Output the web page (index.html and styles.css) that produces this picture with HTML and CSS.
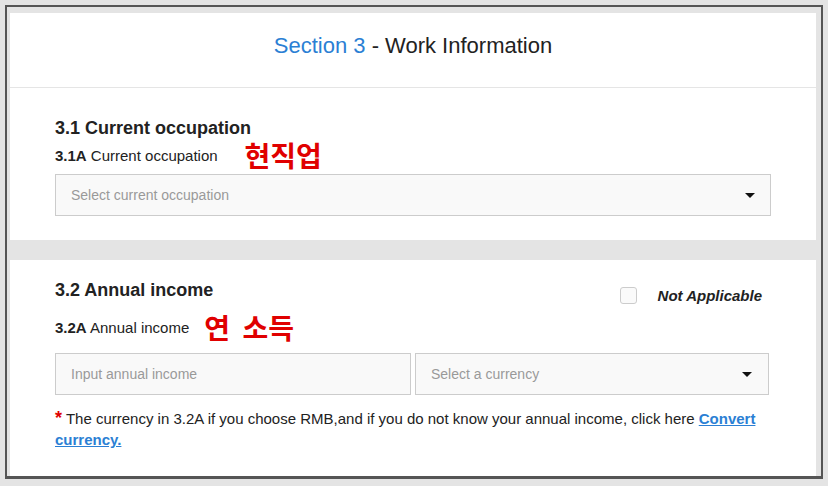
FILE: index.html
```html
<!DOCTYPE html>
<html lang="en">
<head>
  <meta charset="UTF-8">
  <meta name="viewport" content="width=device-width, initial-scale=1.0">
  <title>Section 3 - Work Information</title>
  <link rel="stylesheet" href="styles.css">
</head>
<body>
  <div class="frame">
    <div class="card">
      <div class="card-header">
        <h1><span class="accent">Section 3</span> - Work Information</h1>
      </div>

      <div class="section">
        <h2>3.1 Current occupation</h2>
        <div class="label-row">
          <label class="label"><b>3.1A</b> Current occupation</label>
          <span class="note-ko">현직업</span>
        </div>
        <div class="select">
          <span class="placeholder">Select current occupation</span>
          <span class="caret"></span>
        </div>
      </div>

      <div class="divider"></div>

      <div class="section section-income">
        <div class="title-row">
          <h2>3.2 Annual income</h2>
          <label class="na">
            <span class="checkbox"></span>
            <span class="na-text">Not Applicable</span>
          </label>
        </div>
        <div class="label-row">
          <label class="label"><b>3.2A</b> Annual income</label>
          <span class="note-ko ko-income">연 소득</span>
        </div>
        <div class="field-row">
          <div class="input"><span class="placeholder">Input annual income</span></div>
          <div class="select">
            <span class="placeholder">Select a currency</span>
            <span class="caret"></span>
          </div>
        </div>
        <p class="hint"><span class="star">*</span> The currency in 3.2A if you choose RMB,and if you do not know your annual income, click here <a href="#">Convert currency.</a></p>
      </div>
    </div>
  </div>
</body>
</html>
```

FILE: styles.css
```css
/* 기본 설정 */
:root {
  --accent-color: #2b7fd4;
  --text-color: #222;
  --muted-color: #999;
  --gray-bg: #e4e4e4;
}

body {
  margin: 0;
  padding: 5px;
  background-color: var(--gray-bg);
  font-family: 'Liberation Sans', Arial, sans-serif;
  color: var(--text-color);
}

.frame {
  height: 474px;
  border: 2px solid #555;
  border-bottom-width: 3px;
  padding: 6px 5px 0 3px;
  box-sizing: border-box;
}

.card {
  background: #fff;
  height: 100%;
}

/* 헤더 */
.card-header {
  height: 75px;
  box-sizing: border-box;
  border-bottom: 1px solid #e5e5e5;
  padding-top: 20px;
  text-align: center;
}

h1 {
  margin: 0;
  font-size: 22px;
  font-weight: normal;
  color: #222;
}

.accent {
  color: var(--accent-color);
}

/* 섹션 */
.section {
  padding: 30px 45px 24px;
}

h2 {
  margin: 0;
  font-size: 18px;
  font-weight: bold;
}

.label-row {
  display: flex;
  align-items: center;
  height: 32px;
}

.label {
  font-size: 15px;
}

.note-ko {
  font-family: 'Noto Sans CJK KR', sans-serif;
  font-weight: bold;
  font-size: 28px;
  color: #e00000;
  margin-left: 27px;
  line-height: 32px;
}

.ko-income {
  margin-left: 15px;
  word-spacing: 6px;
}

.select,
.input {
  height: 42px;
  border: 1px solid #ccc;
  background: #f9f9f9;
  box-sizing: border-box;
  display: flex;
  align-items: center;
  padding: 0 15px;
}

.select {
  justify-content: space-between;
  margin-top: 3px;
}

.placeholder {
  font-size: 14px;
  color: var(--muted-color);
}

.caret {
  width: 0;
  height: 0;
  border-left: 5px solid transparent;
  border-right: 5px solid transparent;
  border-top: 5px solid #111;
}

.divider {
  height: 20px;
  background: var(--gray-bg);
}

/* 연 소득 */
.section-income {
  padding-top: 18px;
}

.title-row {
  display: flex;
  justify-content: space-between;
  align-items: center;
  height: 24px;
}

.na {
  display: flex;
  align-items: center;
  margin-right: 9px;
  margin-top: 10px;
}

.checkbox {
  width: 15px;
  height: 15px;
  border: 1px solid #ccc;
  border-radius: 3px;
  background: #fafafa;
}

.na-text {
  margin-left: 21px;
  font-size: 15px;
  font-weight: bold;
  font-style: italic;
}

.section-income .label-row {
  margin-top: 9px;
}

.field-row {
  display: flex;
  gap: 4px;
  margin-top: 10px;
  margin-right: 2px;
}

.field-row .input {
  width: 356px;
  flex: none;
}

.field-row .select {
  flex: 1;
  margin-top: 0;
  padding-right: 16px;
}

.hint {
  margin: 13px 0 0;
  font-size: 15px;
  line-height: 21px;
}

.star {
  color: #e00000;
  font-weight: bold;
  font-size: 18px;
  line-height: 0;
}

.hint a {
  color: var(--accent-color);
  font-weight: bold;
}
```
